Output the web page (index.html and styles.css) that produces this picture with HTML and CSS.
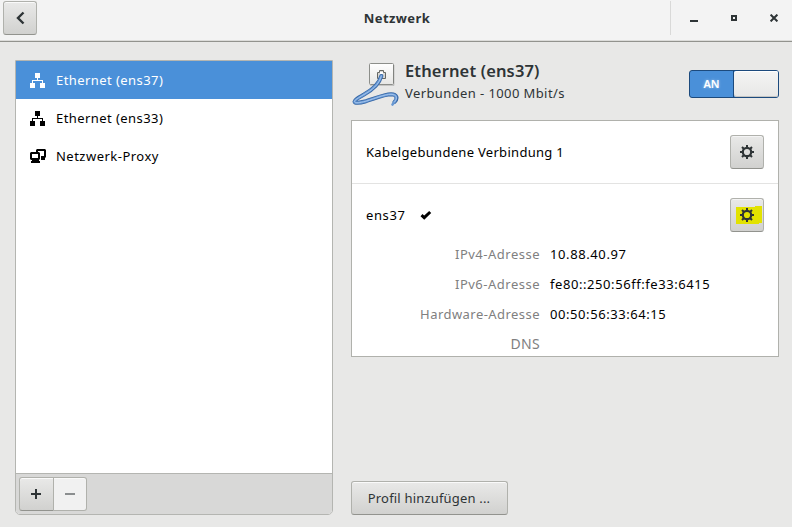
FILE: index.html
```html
<!DOCTYPE html>
<html lang="de">
<head>
<meta charset="utf-8">
<title>Netzwerk</title>
<link rel="stylesheet" href="styles.css">
</head>
<body>
<svg width="0" height="0" class="defs">
  <defs>
    <symbol id="wired" viewBox="0 0 15 15"><path fill="currentColor" d="M5 0h5v5H8v2h5v3h2v5h-5v-5h2V8H3v2h2v5H0v-5h2V7h5V5H5z"/></symbol>
    <symbol id="gear" viewBox="0 0 14 14">
      <g fill="none" stroke="currentColor">
        <circle cx="7" cy="7" r="4.200" stroke-width="2.200"/>
        <path stroke-width="2" d="M7 0v3M7 11v3M0 7h3M11 7h3M2 2l2 2M10 10l2 2M12 2l-2 2M4 10l-2 2"/>
      </g>
    </symbol>
  </defs>
</svg>
<header class="titlebar">
  <button class="btn back" aria-label="Zurück"><svg width="10" height="14" viewBox="0 0 10 14"><path d="M8.500 1.500L3 7L8.500 12.500" fill="none" stroke="#2e3436" stroke-width="2.400"/></svg></button>
  <h1 class="t-title">Netzwerk</h1>
  <div class="controls">
    <svg width="8" height="10" viewBox="0 0 8 10"><path fill="#2e3436" d="M0 7h8v2H0z"/></svg>
    <svg width="6" height="6" viewBox="0 0 6 6"><path fill="none" stroke="#2e3436" stroke-width="2" d="M1 1h4v4H1z"/></svg>
    <svg width="8" height="8" viewBox="0 0 8 8"><path stroke="#2e3436" stroke-width="2" d="M.6 .6l6.800 6.800M7.400 .6L.6 7.400"/></svg>
  </div>
</header>
<main class="content">
  <aside class="sidebar">
    <ul class="devices">
      <li class="device selected"><svg class="icon" width="15" height="15"><use href="#wired"/></svg><span class="t-dev">Ethernet (ens37)</span></li>
      <li class="device"><svg class="icon" width="15" height="15"><use href="#wired"/></svg><span class="t-dev">Ethernet (ens33)</span></li>
      <li class="device"><svg class="proxy" width="16" height="14" viewBox="0 0 16 14"><path fill="currentColor" fill-rule="evenodd" d="M7 0h8l1 1v7l-1 1v2h-4V7h3V2H8v1H6V1zM1 3h8l1 1v6l-1 1v1h1v2H1v-2h1v-1H1l-1-1V4zM2 5v4h6V5z"/></svg><span class="t-proxy">Netzwerk-Proxy</span></li>
    </ul>
    <div class="toolbar">
      <button class="btn add" aria-label="Hinzufügen"><svg width="10" height="10"><path fill="#2e3436" d="M4 0h2v4h4v2H6v4H4V6H0V4h4z"/></svg></button><button class="btn remove" aria-label="Entfernen"><svg width="10" height="2"><path fill="#8b8e8f" d="M0 0h10v2H0z"/></svg></button>
    </div>
  </aside>
  <section class="details">
    <div class="heading">
      <svg class="cable" width="48" height="48" viewBox="0 0 48 48">
        <defs><linearGradient id="plate" x2="0" y2="1"><stop stop-color="#fff"/><stop offset="1" stop-color="#e6e6e4"/></linearGradient></defs>
        <rect x="18.500" y="3.500" width="24" height="21" rx="1" fill="url(#plate)" stroke="#8c8e8a"/>
        <path d="M19 25.500h24V5" fill="none" stroke="#000" stroke-opacity=".15"/>
        <path d="M26.500 18.500v-6h2v-2h4v2h2v6z" fill="#d8d8d6" stroke="#666864"/>
        <path d="M29 12h3v2h-3z" fill="#fff"/>
        <g fill="none" stroke-linecap="round" stroke-linejoin="round">
          <path d="M30.300 16C28 25 21 30 13 34.500C7 38 3.500 40 3.500 41.500C3.500 43.500 8 43 15 41.200C25 38 34 34.300 40 34.300C46 34.500 47 38 43.500 42" stroke="#3465a4" stroke-width="4"/>
          <path d="M30.300 16C28 25 21 30 13 34.500C7 38 3.500 40 3.500 41.500C3.500 43.500 8 43 15 41.200C25 38 34 34.300 40 34.300C46 34.500 47 38 41.500 44.500" stroke="#6797d2" stroke-width="2.600"/>
          <path d="M30.300 16C28 25 21 30 13 34.500C7 38 3.500 40 3.500 41.500C3.500 43.500 8 43 15 41.200C25 38 34 34.300 40 34.300C46 34.500 47 38 43.500 42" stroke="#a9c8ef" stroke-width=".9"/>
        </g>
      </svg>
      <div class="names">
        <h2 class="t-head">Ethernet (ens37)</h2>
        <p class="t-status">Verbunden - 1000 Mbit/s</p>
      </div>
      <div class="switch"><span class="on">AN</span><span class="knob"></span></div>
    </div>
    <div class="profiles">
      <div class="profile first">
        <span class="t-conn">Kabelgebundene Verbindung 1</span>
        <button class="btn options" aria-label="Optionen"><svg width="14" height="14"><use href="#gear"/></svg></button>
      </div>
      <div class="profile second">
        <span class="t-ens">ens37</span>
        <svg class="check" width="12" height="10" viewBox="0 0 12 10"><path d="M1.500 5.200L4.200 7.600L10.200 2" fill="none" stroke="#000" stroke-width="3"/></svg>
        <button class="btn options marked" aria-label="Optionen"><svg class="marker" width="26" height="18" viewBox="0 0 26 18"><path fill="#e2e200" d="M0 1h19V0h7v17h-3v1H0z"/></svg><svg class="gear" width="14" height="14"><use href="#gear"/></svg></button>
      </div>
      <dl class="facts">
        <dt class="t-ip">IPv4-Adresse</dt><dd class="t-v4">10.88.40.97</dd>
        <dt class="t-ip">IPv6-Adresse</dt><dd class="t-v6">fe80::250:56ff:fe33:6415</dd>
        <dt class="t-hw">Hardware-Adresse</dt><dd class="t-mac">00:50:56:33:64:15</dd>
        <dt class="t-dns">DNS</dt><dd></dd>
      </dl>
    </div>
    <button class="btn profile-add"><span class="t-add">Profil hinzufügen ...</span></button>
  </section>
</main>
</body>
</html>
```
FILE: styles.css
```css
* { box-sizing: border-box; }
body {
  margin: 0;
  height: 527px;
  display: flex;
  flex-direction: column;
  overflow: hidden;
  background: #e8e8e7;
  color: #000;
  font: 13px/20px "Noto Sans", "Open Sans", sans-serif;
}
h1, h2, p, ul, dl, dd { margin: 0; padding: 0; }
svg { display: block; flex: none; }
span, h1, h2, p, dt, dd { white-space: nowrap; }
.defs { position: absolute; }
.t-title { letter-spacing: .4px; }
.t-dev { letter-spacing: .43px; }
.t-proxy { letter-spacing: .48px; }
.t-head { letter-spacing: .14px; }
.t-status { letter-spacing: .4px; }
.t-conn { letter-spacing: .3px; }
.t-ens { letter-spacing: .6px; }
.t-ip { letter-spacing: .5px; }
.t-hw { letter-spacing: .45px; }
.t-dns { font-size: 14px; letter-spacing: .3px; }
.t-v4 { letter-spacing: .6px; }
.t-v6 { letter-spacing: .57px; }
.t-mac { letter-spacing: .57px; }
.t-add { letter-spacing: .18px; }
.btn {
  display: flex;
  align-items: center;
  justify-content: center;
  width: 34px;
  height: 34px;
  padding: 0;
  border: 1px solid #b0b1ac;
  border-bottom-color: #92938e;
  border-radius: 3px;
  background: linear-gradient(#e9e9e8, #d1d1cf);
  box-shadow: inset 0 1px #fafafa;
  color: #2e3436;
  font: inherit;
}
.titlebar {
  flex: none;
  display: grid;
  grid-template-columns: 122px 1fr 122px;
  height: 42px;
  background: #f3f3f3;
  border-bottom: 1px solid #92938e;
  box-shadow: inset 0 -1px #dcdcda;
}
.back { margin: 1px 0 0 3px; }
.titlebar h1 {
  justify-self: center;
  padding: 8px 0 0 2px;
  color: #2e3436;
  font-size: 13px;
  font-weight: 700;
}
.controls {
  display: flex;
  align-items: center;
  gap: 33px;
  height: 34px;
  margin-top: 1px;
  padding-left: 19px;
  border-left: 1px solid #d9d9d8;
}
.content {
  flex: 1;
  display: grid;
  grid-template-columns: 318px 428px;
  column-gap: 18px;
  padding: 18px 0 0 15px;
}
.sidebar {
  display: flex;
  flex-direction: column;
  height: 455px;
  border: 1px solid #b4b5b1;
  border-radius: 0 0 5px 5px;
  background: #fff;
  overflow: hidden;
}
.devices { flex: 1; list-style: none; }
.device {
  display: flex;
  align-items: center;
  gap: 11px;
  height: 38px;
  padding-left: 14px;
}
.icon { margin-top: 1px; }
.proxy { margin-right: -1px; }
.selected { background: #4a90d9; color: #fff; }
.toolbar {
  display: flex;
  height: 41px;
  padding: 3px;
  border-top: 1px solid #b4b5b1;
  background: #d8d8d7;
}
.add { width: 35px; padding-right: 1px; border-radius: 3px 0 0 3px; }
.remove {
  width: 33px;
  border-left: 0;
  border-bottom-color: #b0b1ac;
  border-radius: 0 3px 3px 0;
  background: #f1f1f1;
}
.details { display: flex; flex-direction: column; align-items: flex-start; }
.heading { display: flex; width: 428px; height: 60px; color: #2e3436; }
.names { flex: 1; padding-left: 6px; }
.names h2 { font-size: 16.500px; font-weight: 600; line-height: 22px; }
.names p { line-height: 22px; }
.switch {
  display: flex;
  width: 90px;
  height: 28px;
  margin-top: 10px;
  border: 1px solid #1c4a7d;
  border-radius: 3px;
  background: #4a90d9;
}
.on {
  width: 44px;
  border-right: 1px solid #1c4a7d;
  color: #fff;
  font-size: 11px;
  font-weight: 600;
  line-height: 26px;
  text-align: center;
  text-shadow: 0 0 3px #fff8;
}
.knob {
  flex: 1;
  border-radius: 3px 2px 2px 3px;
  background: linear-gradient(#f4f4f4, #e7e7e6);
  box-shadow: inset 0 1px #fff, inset 0 -1px #c5c5c3;
}
.profiles {
  width: 428px;
  height: 237px;
  border: 1px solid #b0b1ac;
  background: #fff;
}
.profile { display: flex; align-items: center; height: 63px; padding: 0 14px; }
.first { border-bottom: 1px solid #e3e3e2; }
.second { height: 62px; }
.options { margin-left: auto; box-shadow: inset 0 1px #f4f4f4; }
.marked { display: grid; }
.marker, .gear { grid-area: 1 / 1; justify-self: center; }
.marker { margin-left: 4px; }
.check { margin-left: 14.500px; }
.facts {
  display: grid;
  grid-template-columns: 188px 1fr;
  grid-auto-rows: 30px;
  column-gap: 10px;
  margin-top: -6px;
  line-height: 28px;
}
.facts dt { justify-self: end; color: #808080; }
.profile-add { width: 157px; padding-right: 1px; margin-top: 124px; }
```
